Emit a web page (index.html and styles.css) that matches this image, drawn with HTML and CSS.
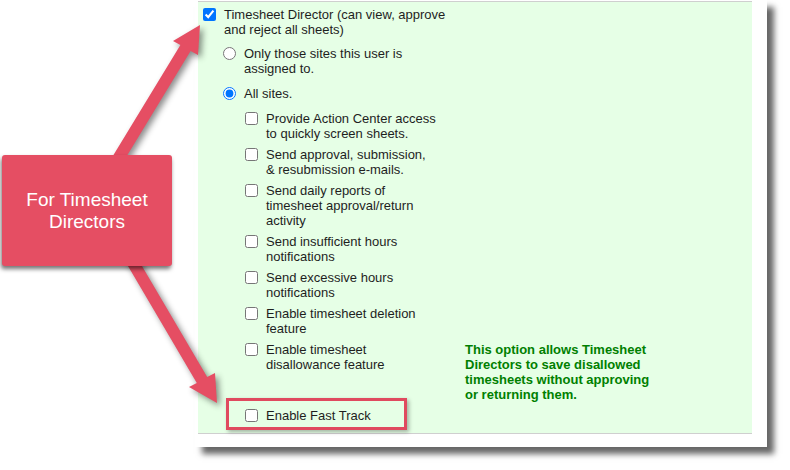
FILE: index.html
```html
<!DOCTYPE html>
<html lang="en">

    <head>
        <meta charset="UTF-8">
        <meta name="viewport" content="width=device-width, initial-scale=1.0">
        <title>Timesheet Director options</title>

        <link rel="stylesheet" href="styles.css">
    </head>

    <body>
        <div class="page">
            <div class="sheet">
                <div class="panel">
                    <label class="row">
                        <input type="checkbox" checked>
                        <span>Timesheet Director (can view, approve<br>and reject all sheets)</span>
                    </label>

                    <div class="scope">
                        <label class="row">
                            <input type="radio" name="scope">
                            <span>Only those sites this user is<br>assigned to.</span>
                        </label>
                        <label class="row">
                            <input type="radio" name="scope" checked>
                            <span>All sites.</span>
                        </label>
                    </div>

                    <div class="subs">
                        <label class="row">
                            <input type="checkbox">
                            <span class="text">Provide Action Center access<br>to quickly screen sheets.</span>
                        </label>
                        <label class="row">
                            <input type="checkbox">
                            <span class="text">Send approval, submission,<br>&amp; resubmission e-mails.</span>
                        </label>
                        <label class="row">
                            <input type="checkbox">
                            <span class="text">Send daily reports of<br>timesheet approval/return<br>activity</span>
                        </label>
                        <label class="row">
                            <input type="checkbox">
                            <span class="text">Send insufficient hours<br>notifications</span>
                        </label>
                        <label class="row">
                            <input type="checkbox">
                            <span class="text">Send excessive hours<br>notifications</span>
                        </label>
                        <label class="row">
                            <input type="checkbox">
                            <span class="text">Enable timesheet deletion<br>feature</span>
                        </label>
                        <div class="row">
                            <input type="checkbox" id="disallow">
                            <label class="text" for="disallow">Enable timesheet<br>disallowance feature</label>
                            <p class="note">This option allows Timesheet<br>Directors to save disallowed<br>timesheets without approving<br>or returning them.</p>
                        </div>
                        <label class="row">
                            <input type="checkbox">
                            <span class="text">Enable Fast Track</span>
                        </label>
                    </div>
                </div>
            </div>

            <!-- annotation layer -->
            <svg class="arrows" width="260" height="420" viewBox="0 0 260 420">
                <polygon points="105.1,168.7 180.4,44.9 173,41 200,25 198,55 190.6,51.1 115.3,174.9" />
                <polygon points="116.8,247.1 196.8,383.1 189,387 217,403 215,373 207.2,376.9 127.2,240.9" />
            </svg>
            <div class="callout">For Timesheet<br>Directors</div>
            <div class="highlight"></div>
        </div>
    </body>

</html>
```

FILE: styles.css
```css
* {
    margin: 0;
    padding: 0;
    box-sizing: border-box;
}

body {
    background-color: #fff;
    color: #1e1e1e;
    font-family: "Liberation Sans", Arial, sans-serif;
    font-size: 13px;
}

.page {
    position: relative;
    width: 790px;
    height: 470px;
    overflow: hidden;
}

.sheet {
    width: 572px;
    height: 447px;
    margin-left: 195px;
    padding: 1px 15px 0 3px;
    background-color: #fff;
    box-shadow: 7px 7px 6px rgba(0, 0, 0, 0.6);
}

.panel {
    display: flex;
    flex-direction: column;
    padding: 5px 0 10px 5px;
    background-color: #e6ffe6;
    border-top: 1px solid #cfcfcf;
    border-bottom: 1px solid #cfcfcf;
}

.row {
    display: flex;
    align-items: flex-start;
    gap: 8px;
    line-height: 15px;
}

.row input {
    flex: none;
    width: 13px;
    height: 13px;
    margin: 1px 0 0 0;
}

.scope {
    display: flex;
    flex-direction: column;
    gap: 10px;
    margin: 9px 0 0 20px;
}

.subs {
    display: flex;
    flex-direction: column;
    gap: 6px;
    margin: 10px 0 0 42px;
}

.subs .text {
    width: 170px;
}

.note {
    margin-left: 21px;
    color: #008000;
    font-weight: bold;
}

.arrows {
    position: absolute;
    left: 0;
    top: 0;
    fill: #e54e63;
    filter: drop-shadow(3px 3px 3px rgba(0, 0, 0, 0.45));
}

.callout {
    position: absolute;
    left: 2px;
    top: 155px;
    width: 170px;
    height: 111px;
    display: flex;
    align-items: center;
    justify-content: center;
    text-align: center;
    background-color: #e54e63;
    border-radius: 3px;
    box-shadow: -1px 3px 4px rgba(0, 0, 0, 0.55);
    color: #fff;
    font-size: 19px;
    line-height: 22px;
}

.highlight {
    position: absolute;
    left: 226px;
    top: 398px;
    width: 181px;
    height: 32px;
    border: 3px solid #e04a5f;
    box-shadow: 2px 2px 4px rgba(0, 0, 0, 0.3);
}
```
